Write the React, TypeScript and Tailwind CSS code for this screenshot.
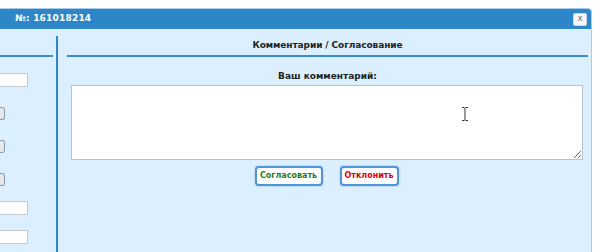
import React from "react";

const leftRows = [
  { kind: "input", mt: "mt-[16px]" },
  { kind: "check", mt: "mt-[20px]" },
  { kind: "check", mt: "mt-[20px]" },
  { kind: "check", mt: "mt-[20px]" },
  { kind: "input", mt: "mt-[15px]" },
  { kind: "input", mt: "mt-[15px]" },
];

function IBeam() {
  return (
    <svg className="absolute left-[461px] top-[107px]" width="8" height="14" viewBox="0 0 8 14">
      <path d="M1 0.5h2.5M4.5 0.5H7M4 1v12M1 13.5h2.5M4.5 13.5H7" stroke="#333" strokeWidth="1" fill="none" />
    </svg>
  );
}

export default function App() {
  return (
    <div className="relative w-[614px] h-[252px] overflow-hidden bg-white pt-[8px] font-['DejaVu_Sans',sans-serif]">
      <div className="w-[592px] h-[244px] flex flex-col rounded-tr-[4px] border-t border-r border-[#a9cbe6] overflow-hidden">
        {/* title bar */}
        <div className="h-[20px] shrink-0 bg-[#2c86c8] flex items-center justify-between pl-[15px] pr-[4px]">
          <span className="text-[9px] font-bold text-white tracking-[0.2px]">№: 161018214</span>
          <div className="w-[14px] h-[13px] border border-[#c9d6e0] rounded-[2px] bg-[#f4f6f8] flex items-center justify-center text-[8px] leading-none text-[#666]">
            x
          </div>
        </div>

        {/* body */}
        <div className="flex-1 bg-[#dcefff] flex">
          {/* left column (scrolled) */}
          <div className="w-[59px] shrink-0 flex">
            <div className="w-[56px]">
              <div className="h-[28px] w-[53px] border-b-2 border-[#3a8ccb]" />
              {leftRows.map((r, i) =>
                r.kind === "input" ? (
                  <div key={i} className={`${r.mt} w-[28px] h-[14px] bg-white border border-l-0 border-[#c3ccd3]`} />
                ) : (
                  <div
                    key={i}
                    className={`${r.mt} w-[5px] h-[13px] rounded-r-[3px] border border-l-0 border-[#8d9aa5] bg-[#e6e9ec]`}
                  />
                )
              )}
            </div>
            <div className="mt-[7px] w-[2px] bg-[#2f86c7]" />
          </div>

          {/* right column */}
          <div className="flex-1 pl-[8px] pr-[3px] pt-[7px]">
            <div className="h-[21px] border-b-2 border-[#3a8ccb] flex items-center justify-center">
              <span className="text-[9px] font-bold text-[#222] tracking-[-0.1px]">Комментарии / Согласование</span>
            </div>
            <div className="px-[4px]">
              <div className="mt-[13px] text-center text-[9px] font-bold text-[#222] leading-[12px]">Ваш комментарий:</div>
              <textarea className="mt-[3px] block w-[512px] h-[75px] bg-white border border-[#b9c3cb] outline-none" />
              <div className="mt-[6px] flex justify-center gap-[17px] pr-[2px]">
                <button className="w-[68px] h-[20px] rounded-[4px] border-2 border-[#4f95d8] bg-white shadow-[0_0_2px_#7fb6ea] text-[8px] font-bold text-[#1d7d1d]">
                  Согласовать
                </button>
                <button className="w-[59px] h-[20px] rounded-[4px] border-2 border-[#4f95d8] bg-white shadow-[0_0_2px_#7fb6ea] text-[8px] font-bold text-[#e00000]">
                  Отклонить
                </button>
              </div>
            </div>
          </div>
        </div>
      </div>
      <IBeam />
    </div>
  );
}
